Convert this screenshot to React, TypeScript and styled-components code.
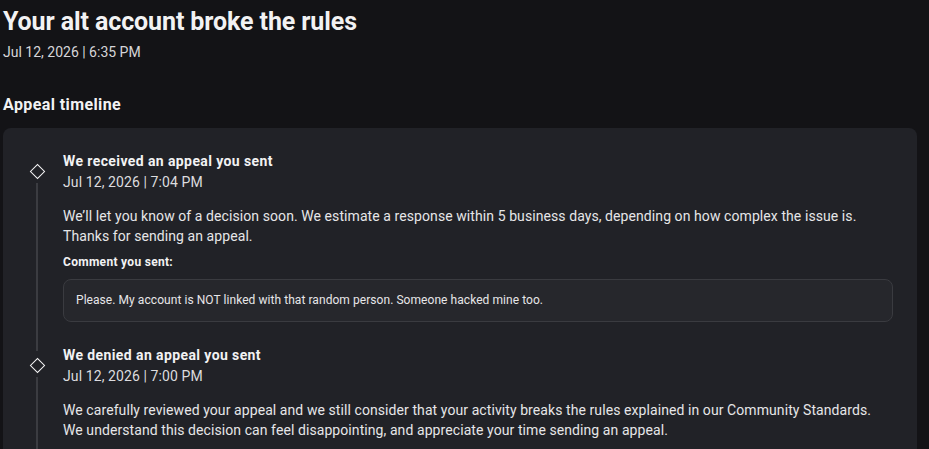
import styled, { createGlobalStyle } from "styled-components";

const GlobalStyle = createGlobalStyle`
  html, body {
    margin: 0;
    padding: 0;
    background-color: #131316;
  }

  body {
    font-family: Roboto, "Noto Sans", "Liberation Sans", sans-serif;
    color: #f2f2f3;
    -webkit-font-smoothing: antialiased;
  }
`;

const Page = styled.main`
  padding: 6px 12px 0 3px;
`;

const Title = styled.h1`
  margin: 0;
  font-size: 25px;
  line-height: 32px;
  font-weight: 700;
  letter-spacing: -0.1px;
`;

const Stamp = styled.div`
  margin-top: 4px;
  font-size: 14px;
  line-height: 20px;
  color: #d6d6d9;
`;

const SectionHeading = styled.h2`
  margin: 32px 0 0;
  font-size: 16px;
  line-height: 22px;
  font-weight: 700;
  letter-spacing: 0.4px;
`;

const Card = styled.section`
  margin-top: 12px;
  background-color: #212227;
  border-radius: 8px;
  padding: 23px 24px 0 0;
`;

const Item = styled.article<{ $last?: boolean }>`
  display: grid;
  grid-template-columns: 60px 1fr;
  padding-bottom: ${(p) => (p.$last ? "20px" : "23px")};
`;

const Rail = styled.div`
  display: flex;
  flex-direction: column;
  align-items: center;
  padding-left: 8px;
`;

const Diamond = styled.span`
  width: 11px;
  height: 11px;
  margin-top: 15px;
  border: 1.5px solid #f4f4f5;
  transform: rotate(45deg);
  box-sizing: border-box;
  flex-shrink: 0;
`;

const Line = styled.span`
  width: 2px;
  flex: 1;
  margin-top: 6px;
  margin-bottom: -29px;
  background-color: #3b3c41;
`;

const Body = styled.div`
  min-width: 0;
`;

const ItemTitle = styled.h3`
  margin: 0;
  font-size: 14px;
  line-height: 21px;
  font-weight: 700;
  letter-spacing: 0.4px;
`;

const ItemDate = styled.div`
  font-size: 14px;
  line-height: 20px;
  color: #dcdcdf;
  letter-spacing: 0.1px;
`;

const Text = styled.p`
  margin: 14px 0 0;
  font-size: 14px;
  line-height: 20px;
  color: #e6e6e8;
  letter-spacing: 0.08px;
`;

const Label = styled.div`
  margin-top: 8px;
  font-size: 12px;
  line-height: 16px;
  font-weight: 700;
  letter-spacing: 0.3px;
`;

const CommentBox = styled.div`
  margin-top: 9px;
  padding: 12px 12px 13px;
  border: 1px solid #3a3b40;
  border-radius: 8px;
  background-color: #26272c;
  font-size: 12px;
  line-height: 16px;
  color: #e6e6e8;
  letter-spacing: 0.06px;
`;

type Event = {
  title: string;
  date: string;
  text: string[];
  comment?: string;
};

const events: Event[] = [
  {
    title: "We received an appeal you sent",
    date: "Jul 12, 2026 | 7:04 PM",
    text: [
      "We\u2019ll let you know of a decision soon. We estimate a response within 5 business days, depending on how complex the issue is.",
      "Thanks for sending an appeal.",
    ],
    comment:
      "Please. My account is NOT linked with that random person. Someone hacked mine too.",
  },
  {
    title: "We denied an appeal you sent",
    date: "Jul 12, 2026 | 7:00 PM",
    text: [
      "We carefully reviewed your appeal and we still consider that your activity breaks the rules explained in our Community Standards.",
      "We understand this decision can feel disappointing, and appreciate your time sending an appeal.",
    ],
  },
];

function App() {
  return (
    <>
      <GlobalStyle />
      <Page>
        <Title>Your alt account broke the rules</Title>
        <Stamp>Jul 12, 2026 | 6:35 PM</Stamp>

        <SectionHeading>Appeal timeline</SectionHeading>

        <Card>
          {events.map((ev, i) => (
            <Item key={ev.date} $last={i === events.length - 1}>
              <Rail>
                <Diamond />
                <Line />
              </Rail>
              <Body>
                <ItemTitle>{ev.title}</ItemTitle>
                <ItemDate>{ev.date}</ItemDate>
                <Text>
                  {ev.text[0]}
                  <br />
                  {ev.text[1]}
                </Text>
                {ev.comment && (
                  <>
                    <Label>Comment you sent:</Label>
                    <CommentBox>{ev.comment}</CommentBox>
                  </>
                )}
              </Body>
            </Item>
          ))}
        </Card>
      </Page>
    </>
  );
}

export default App;
